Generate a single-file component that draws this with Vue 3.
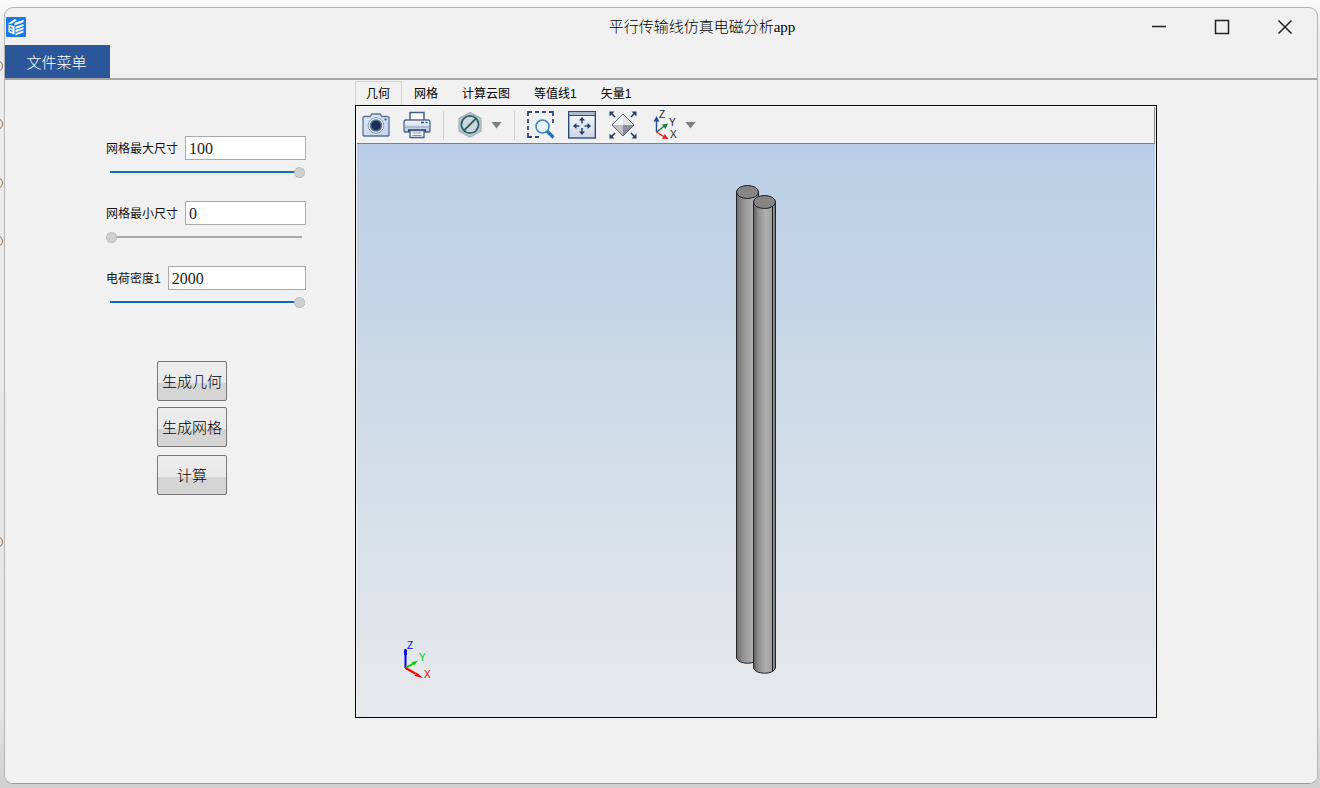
<script setup>
import { ref, reactive } from 'vue'

const fields = reactive([
  { id: 'mesh-max', label: '网格最大尺寸', value: '100', min: 0, max: 100 },
  { id: 'mesh-min', label: '网格最小尺寸', value: '0', min: 0, max: 100 },
  { id: 'charge', label: '电荷密度1', value: '2000', min: 0, max: 2000 }
])
const tabs = ['几何', '网格', '计算云图', '等值线1', '矢量1']
const active = ref(0)
const fill = (f) => ((f.value - f.min) / (f.max - f.min)) * 100 + '%'
</script>

<template>
  <div class="desktop">
    <i class="peek p1"></i><i class="peek p2"></i><i class="peek p3"></i><i class="peek p4"></i><i class="peek p5"></i>
    <div class="window">
      <header class="titlebar">
        <svg class="logo" viewBox="0 0 20 20" width="20" height="20" aria-hidden="true">
          <rect width="20" height="20" rx="1" fill="#1677f0" />
          <path d="M2 6.500l7-4.500 1.800 1.200L5 7zM8.500 6l9-3.200v2.400L8.500 8.400z" fill="#fff" />
          <path d="M2.500 7.500l6 1.700v8.600L2.500 15z" fill="#fff" />
          <path d="M4 9.800l2.500.7v1.500L4 11.300zM4 12.800l2.500.9v1.300L4 14z" fill="#1677f0" />
          <path d="M9.500 9.700l8-2.700v2l-8 2.900zM9.500 13l8-2.700v2l-8 2.900zM9.500 16.300l8-2.700v2l-8 2.900z" fill="#fff" />
        </svg>
        <h1>平行传输线仿真电磁分析app</h1>
        <div class="controls">
          <button aria-label="最小化"><svg width="16" height="16"><path d="M1 7.500h14" /></svg></button>
          <button aria-label="最大化"><svg width="16" height="16"><rect x="1.500" y="1.500" width="13" height="13" /></svg></button>
          <button aria-label="关闭"><svg width="16" height="16"><path d="M1.500 1.500l13 13M14.500 1.500l-13 13" /></svg></button>
        </div>
      </header>
      <nav class="menubar"><button>文件菜单</button></nav>

      <main>
        <form class="side" @submit.prevent>
          <div v-for="f in fields" :key="f.id" class="field">
            <div class="line">
              <label :for="f.id">{{ f.label }}</label>
              <input :id="f.id" v-model="f.value" type="text" />
            </div>
            <input v-model="f.value" type="range" :min="f.min" :max="f.max" :aria-label="f.label" :style="{ '--fill': fill(f) }" />
          </div>
          <div class="actions">
            <button type="button">生成几何</button>
            <button type="button">生成网格</button>
            <button type="button" class="run">计算</button>
          </div>
        </form>

        <section class="viewer">
          <div class="tabs" role="tablist">
            <button v-for="(t, i) in tabs" :key="t" role="tab" :aria-selected="i === active" :class="{ on: i === active }" @click="active = i">{{ t }}</button>
          </div>
          <div class="panel">
            <div class="toolbar">
              <button aria-label="截图">
                <svg viewBox="0 0 28 28">
                  <defs><linearGradient id="cam" x2="1" y2="1"><stop stop-color="#dfe9f6" /><stop offset="1" stop-color="#c3d2ea" /></linearGradient></defs>
                  <path d="M1 24.500V6.500l1-1h6l2-2.500h8l2 2.500h6l1 1v18l-1 .5H2z" fill="url(#cam)" stroke="#56719c" stroke-width="1.300" />
                  <circle cx="14" cy="14.500" r="7.800" fill="#f5f8fc" stroke="#8397ba" />
                  <circle cx="14" cy="14.500" r="6.200" fill="#5a7298" /><circle cx="14" cy="14.500" r="4.800" fill="#1b2f5c" />
                  <circle cx="23.500" cy="8.500" r="1" fill="#29436f" />
                </svg>
              </button>
              <button aria-label="打印">
                <svg viewBox="0 0 28 28">
                  <defs><linearGradient id="pr" x2="0" y2="1"><stop stop-color="#f8fafd" /><stop offset="1" stop-color="#b4c2d8" /></linearGradient></defs>
                  <path d="M7 10V1.500h14V10" fill="#fff" stroke="#435f8c" stroke-width="1.500" />
                  <path d="M3 9h22q2 0 2 2v9q0 1-1 1H2q-1 0-1-1v-9q0-2 2-2z" fill="url(#pr)" stroke="#4e668f" stroke-width="1.300" />
                  <path d="M1.500 16h25" stroke="#8b9bb8" />
                  <path d="M18 11.500h3m1.500 0h2" stroke="#344d78" stroke-width="1.500" />
                  <path d="M5 19.500h18" stroke="#26406e" stroke-width="2.500" />
                  <path d="M7 19.500h14v7H7z" fill="#fff" stroke="#435f8c" stroke-width="1.300" />
                  <path d="M9.500 22h9m-9 2.500h9" stroke="#7f8fa9" />
                </svg>
              </button>
              <span class="sep"></span>
              <button aria-label="隐藏">
                <svg viewBox="0 0 28 28">
                  <path d="M14 1.500l11 6v12.500l-11 6-11-6V7.500z" fill="#b9c9cc" stroke="#a3b4b9" stroke-width="1.300" />
                  <circle cx="14" cy="13.500" r="8.600" fill="#ccd9db" stroke="#315d6c" stroke-width="1.800" />
                  <path d="M8 19.500l12-12" stroke="#315d6c" stroke-width="1.800" />
                </svg>
              </button>
              <button class="caret" aria-label="更多隐藏选项"></button>
              <span class="sep"></span>
              <button aria-label="框选缩放">
                <svg viewBox="0 0 28 28">
                  <path d="M1 5V1h4M8 1h4M15 1h4M22 1h4v4M26 8v4M1 8v4M1 15v4M1 22v4h4M8 26h4" fill="none" stroke="#304a78" stroke-width="1.800" />
                  <path d="M20 20l6.500 6.500" stroke="#2472b4" stroke-width="3.200" />
                  <circle cx="15.500" cy="15.500" r="6.500" fill="#eaf4fc" stroke="#3c87bd" stroke-width="1.600" />
                </svg>
              </button>
              <button aria-label="平移">
                <svg viewBox="0 0 28 28">
                  <defs><linearGradient id="bx" x2="0" y2="1"><stop stop-color="#f8fafd" /><stop offset="1" stop-color="#cdd5e4" /></linearGradient></defs>
                  <rect x=".7" y=".7" width="26.600" height="26.300" fill="url(#bx)" stroke="#304a78" stroke-width="1.400" />
                  <path d="M1.500 2.300h25" stroke="#a5bad7" stroke-width="2" /><path d="M1 4.300h26" stroke="#304a78" stroke-width="1.300" />
                  <path d="M14 8v4.500M14 17v5M7 15h4.500M16.500 15h5" stroke="#304a78" stroke-width="1.600" />
                  <path d="M14 6l3 3.500h-6zM14 24l3-3.500h-6zM5 15l3.500-3v6zM23 15l-3.500-3v6z" fill="#223b6a" />
                </svg>
              </button>
              <button aria-label="适应窗口">
                <svg viewBox="0 0 28 28">
                  <path d="M14 3.500L25 14H3z" fill="#f6f6f6" /><path d="M3 14h11v11z" fill="#c1c3c6" /><path d="M25 14H14v11z" fill="#8b8f95" /><path d="M14 4l11 10H14z" fill="#e0e1e3" />
                  <path d="M14 3L25 14 14 25 3 14z" fill="none" stroke="#536078" />
                  <path d="M1.500 1.500l4.500 4.500M26.500 1.500L22 6M1.500 26.500L6 22M26.500 26.500L22 22" stroke="#243b68" stroke-width="1.600" />
                  <path d="M.5.5h5l-5 5zM27.500.5h-5l5 5zM.5 27.500h5l-5-5zM27.500 27.500h-5l5-5z" fill="#243b68" />
                </svg>
              </button>
              <button aria-label="视图方向">
                <svg viewBox="0 0 28 28">
                  <path d="M6.500 21V8" stroke="#244b98" stroke-width="1.400" /><path d="M6.500 5l3 5.500h-6z" fill="#244b98" />
                  <path d="M6.500 21l8-6" stroke="#16813d" stroke-width="1.400" /><path d="M18 12.500l-2.500 5.500-3.500-4.500z" fill="#16813d" />
                  <path d="M6.500 21l8 5" stroke="#ec2024" stroke-width="1.400" /><path d="M18.500 28l-6.500-.2 2.800-4.800z" fill="#ec2024" />
                  <g font-family="Liberation Sans, sans-serif" font-size="10" fill="#222"><text x="9" y="7">Z</text><text x="19" y="15">Y</text><text x="20" y="27">X</text></g>
                </svg>
              </button>
              <button class="caret" aria-label="更多视图方向"></button>
            </div>
            <div class="canvas">
              <svg class="model" width="40" height="490" viewBox="0 0 40 490" role="img" aria-label="平行传输线几何">
                <defs>
                  <linearGradient id="c1"><stop stop-color="#6b6b6b" /><stop offset=".3" stop-color="#929292" /><stop offset=".75" stop-color="#b0b0b0" /><stop offset="1" stop-color="#a4a4a4" /></linearGradient>
                  <linearGradient id="c2"><stop stop-color="#606060" /><stop offset=".25" stop-color="#929292" /><stop offset=".55" stop-color="#b0b0b0" /><stop offset=".8" stop-color="#a4a4a4" /><stop offset="1" stop-color="#777" /></linearGradient>
                </defs>
                <path d="M.5 7v466c2 7 20 7 22 0V7z" fill="url(#c1)" />
                <path d="M.5 7v466c2 7 20 7 22 0V7" fill="none" stroke="#242424" />
                <ellipse cx="11.500" cy="7" rx="11" ry="6.500" fill="#858585" stroke="#1d1d1d" />
                <path d="M17.500 17v466c2 7 20 7 22 0V17z" fill="url(#c2)" />
                <path d="M17.500 17v466c2 7 20 7 22 0V17M36.500 21v466" fill="none" stroke="#242424" />
                <ellipse cx="28.500" cy="17" rx="11" ry="6.500" fill="#858585" stroke="#1d1d1d" />
              </svg>
              <svg class="triad" width="32" height="42" viewBox="0 0 32 42" aria-label="坐标轴">
                <path d="M3.500 28V9" stroke="#00f" stroke-width="2" /><path d="M2 10h3v5H2z" fill="#00c" />
                <path d="M3.500 28l8-4.500" stroke="#0c0" stroke-width="2" /><path d="M16 20.500l-3.500 4.500-3-2.500z" fill="#00c800" />
                <path d="M3.500 28l10 5.500" stroke="#f00" stroke-width="2" /><path d="M21 38l-8.500-2 2-3.500z" fill="#f00" />
                <g font-family="Liberation Sans, sans-serif" font-size="10"><text x="5" y="9" fill="#00f">Z</text><text x="17" y="21" fill="#0c0">Y</text><text x="22" y="38" fill="#d00">X</text></g>
              </svg>
            </div>
          </div>
        </section>
      </main>
    </div>
  </div>
</template>

<style>
body { margin: 0; }
</style>

<style scoped>
* { box-sizing: border-box; }
button { border: 0; padding: 0; background: none; color: #000; }
.desktop {
  position: relative; height: 100vh; padding: 7px 2px 4px 4px; overflow: hidden;
  background: linear-gradient(#fafafa, #ededed 28px, #e6e6e6 90%, #cfcfcf);
  font-family: "Liberation Sans", "Noto Sans CJK SC", sans-serif;
}
.peek { position: absolute; left: -9px; width: 12px; height: 12px; border: 1px solid #8a6e50; border-radius: 50%; }
.p1 { top: 60px; } .p2 { top: 118px; } .p3 { top: 177px; } .p4 { top: 235px; } .p5 { top: 536px; }
.window {
  position: relative; display: flex; flex-direction: column; height: 100%;
  border: 1px solid #b4b4b4; border-bottom-color: #999; border-radius: 9px; background: #f0f0f0; overflow: hidden;
}
.titlebar { display: grid; grid-template-columns: 272px 1fr 190px; align-items: center; height: 37px; flex: none; }
.logo { margin-left: 1px; }
h1 {
  margin: 0; text-align: center; font-weight: 300; font-size: 15px; line-height: 20px; color: #000;
  font-family: "Liberation Serif", "Noto Sans CJK SC", serif;
}
.controls { display: flex; }
.controls button { flex: 1; height: 36px; }
.controls svg { display: block; margin: auto; fill: none; stroke: #222; stroke-width: 1.5; }
.menubar { flex: none; height: 35px; border-bottom: 2px solid #a6a6a6; }
.menubar button {
  display: block; width: 105px; height: 33px; padding-right: 2px; background: #2b579a; color: #fff;
  font: 300 15px/33px "Noto Sans CJK SC", sans-serif;
}
main { flex: 1; display: flex; min-height: 0; background: #f1f1f1; }
.side { width: 350px; flex: none; padding: 56px 49px 0 101px; }
.field { height: 42px; margin-bottom: 23px; }
.line { display: flex; align-items: center; gap: 7px; }
label { flex: none; padding-top: 2px; font-size: 12px; line-height: 22px; color: #111; white-space: nowrap; }
.line input {
  flex: 1; min-width: 0; height: 24px; border: 1px solid #a9a9a9; padding: 2px 3px 0; background: #fff; color: #222;
  font: 16px/20px "Liberation Serif", serif; outline: 0;
}
input[type="range"] {
  display: block; appearance: none; width: 199px; height: 12px; margin: 6px 0 0;
  background:
    linear-gradient(90deg, #0f6cb8 var(--fill), #a8a8a8 var(--fill)) 4px 5px / calc(100% - 7px) 2px no-repeat;
}
input[type="range"]::-webkit-slider-thumb { appearance: none; width: 11px; height: 11px; border: 1px dotted #aaa; border-radius: 50%; background: #d0d0d0; }
.actions { display: flex; flex-direction: column; gap: 6px; width: 70px; margin: 53px 0 0 51px; }
.actions button {
  height: 40px; border: 1px solid #777; border-radius: 2px; color: #000;
  background: linear-gradient(#ededed, #e9e9e9 54%, #d5d5d5 54%);
  font: 300 15px/20px "Noto Sans CJK SC", sans-serif;
}
.actions .run { margin-top: 2px; }
.viewer { flex: 1; min-width: 0; display: flex; flex-direction: column; margin: 1px 160px 65px 0; }
.tabs { display: flex; height: 24px; flex: none; }
.tabs button { padding: 2px 12px 0; font: 12px/22px "Liberation Sans", "Noto Sans CJK SC", sans-serif; white-space: nowrap; }
.tabs .on { padding: 1px 11px 0 10px; border: 1px solid #d2d2d2; border-bottom: 0; background: #f1f1f1; }
.panel { flex: 1; min-height: 0; display: flex; flex-direction: column; border: 1px solid #000; }
.toolbar {
  display: flex; align-items: center; gap: 13px; flex: none; height: 38px; padding-left: 5px; margin: 0 1px;
  border-top: 1px solid #fff; border-right: 1px solid #888; border-bottom: 1px solid #808080;
}
.toolbar button { width: 28px; height: 28px; flex: none; }
.toolbar svg { display: block; width: 28px; height: 28px; overflow: visible; }
.toolbar .sep { width: 1px; height: 29px; margin: 0 -1px; background: #cfcfcf; }
.toolbar .caret { width: 11px; height: 7px; margin-left: -6px; background: #808080; clip-path: polygon(0 0, 100% 0, 50% 100%); }
.canvas { position: relative; flex: 1; min-height: 0; display: grid; place-items: center; margin: 0 1px; background: linear-gradient(#b9cee6, #d0dce8 50%, #e8e9ec); }
.model { margin-bottom: 2px; }
.triad { position: absolute; left: 45px; bottom: 35px; }
</style>
